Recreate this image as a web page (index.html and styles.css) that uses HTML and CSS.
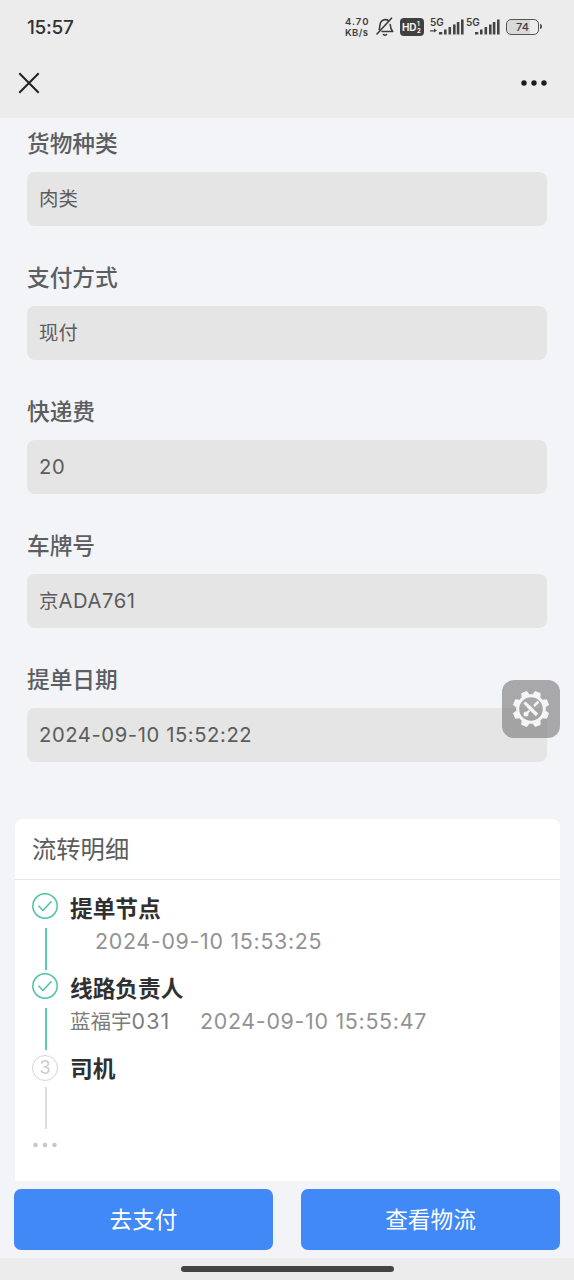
FILE: index.html
```html
<!DOCTYPE html>
<html lang="zh-CN">
<head>
<meta charset="utf-8">
<title>提单</title>
<link rel="stylesheet" href="styles.css">
</head>
<body>
<div class="screen">
  <header class="top">
    <div class="status">
      <span class="clock">15:57</span>
      <div class="indicators">
        <div class="speed"><span>4.70</span><span>KB/s</span></div>
        <svg class="bell" width="18" height="20" viewBox="0 0 18 20" fill="none" stroke="#3c3c3c" stroke-width="1.600" stroke-linecap="round" stroke-linejoin="round"><path d="M3.200 12.500C4.200 10 3.200 7 5.200 4.500C7 2.300 10.500 2 12.800 3.800M14.200 7.500c.2 3 .8 5.300 2.500 7H6M7.500 17.500c.8.900 2.200.9 3 0M15.500 1.200L1 17"/></svg>
        <div class="hd">HD<span class="hd-sub"><i>1</i><i>2</i></span></div>
        <div class="signal"><span>5G</span><svg width="34" height="20" viewBox="0 0 34 20" fill="#444"><path d="M0 13.300h4V11.500l3 2-3 2v-1H0zM9 15h3.300v2.500H9zM14 12.500h2.600v5H14zM18.500 10h2.600v7.500h-2.600zM23 7.500h2.600v10H23zM26.800 5h2.600v12.500h-2.600zM31 2.500h2.600v15H31z"/></svg></div>
        <div class="signal"><span>5G</span><svg width="34" height="20" viewBox="0 0 34 20" fill="#444"><path d="M9 15h3.300v2.500H9zM14 12.500h2.600v5H14zM18.500 10h2.600v7.500h-2.600zM23 7.500h2.600v10H23zM26.800 5h2.600v12.500h-2.600zM31 2.500h2.600v15H31z"/></svg></div>
        <div class="battery"><span>74</span></div>
      </div>
    </div>
    <nav class="nav">
      <svg width="22" height="22" viewBox="0 0 22 22" fill="none" stroke="#222" stroke-width="2"><path d="M1.300 1.300l19.400 19.400M20.700 1.300L1.300 20.700"/></svg>
      <svg width="28" height="8" viewBox="0 0 28 8" fill="#1c1c1c"><circle cx="4" cy="4" r="2.700"/><circle cx="14" cy="4" r="2.700"/><circle cx="24" cy="4" r="2.700"/></svg>
    </nav>
  </header>
  <main class="content">
    <section class="form">
      <div class="field"><label class="label">货物种类</label><div class="value">肉类</div></div>
      <div class="field"><label class="label">支付方式</label><div class="value">现付</div></div>
      <div class="field"><label class="label">快递费</label><div class="value"><span class="num">20</span></div></div>
      <div class="field"><label class="label">车牌号</label><div class="value">京<span class="num">ADA761</span></div></div>
      <div class="field"><label class="label">提单日期</label><div class="value"><span class="num">2024-09-10 15:52:22</span></div></div>
    </section>
    <section class="card">
      <h2 class="card-title">流转明细</h2>
      <ol class="steps">
        <li class="step">
          <div class="rail"><svg width="26" height="26" viewBox="0 0 26 26" fill="none" stroke="#4cc3a0" stroke-width="1.500"><circle cx="13" cy="13" r="12.200"/><path d="M6.500 12.800l4.500 4.700 8.500-9.300"/></svg><i class="line"></i></div>
          <div class="info"><h3>提单节点</h3><p class="indent"><span class="num">2024-09-10 15:53:25</span></p></div>
        </li>
        <li class="step">
          <div class="rail"><svg width="26" height="26" viewBox="0 0 26 26" fill="none" stroke="#4cc3a0" stroke-width="1.500"><circle cx="13" cy="13" r="12.200"/><path d="M6.500 12.800l4.500 4.700 8.500-9.300"/></svg><i class="line"></i></div>
          <div class="info"><h3>线路负责人</h3><p><span class="person">蓝福宇<span class="num">031</span></span><span class="num">2024-09-10 15:55:47</span></p></div>
        </li>
        <li class="step">
          <div class="rail"><span class="number">3</span><i class="line"></i></div>
          <div class="info"><h3>司机</h3></div>
        </li>
      </ol>
      <svg class="more" width="26" height="6" viewBox="0 0 26 6" fill="#c8c8c8"><circle cx="3.500" cy="3" r="2.300"/><circle cx="13" cy="3" r="2.300"/><circle cx="22.500" cy="3" r="2.300"/></svg>
    </section>
    <div class="actions"><button class="btn">去支付</button><button class="btn">查看物流</button></div>
    <button class="tool" aria-label="工具">
      <svg width="38" height="38" viewBox="-19 -19 38 38" fill="none" stroke="#f5f5f5"><circle r="13.300" stroke-width="3"/><g fill="#f5f5f5" stroke="none" transform="rotate(22.500)"><path id="tooth" d="M-4.300-14L-3-18.300H3L4.300-14z"/><use href="#tooth" transform="rotate(45)"/><use href="#tooth" transform="rotate(90)"/><use href="#tooth" transform="rotate(135)"/><use href="#tooth" transform="rotate(180)"/><use href="#tooth" transform="rotate(225)"/><use href="#tooth" transform="rotate(270)"/><use href="#tooth" transform="rotate(315)"/></g><circle cx="-5" cy="5" r="2.500" fill="#f5f5f5" stroke="none"/><path d="M-6.500-6.500L-2-2" stroke-width="3"/><path d="M-3-3L6 6" stroke-width="3.500"/><path d="M7.500-7.500L3-3" stroke-width="2.500"/><path d="M-5 5L-1.500 1.500" stroke-width="2"/></svg>
    </button>
  </main>
  <footer class="home"><i></i></footer>
</div>
</body>
</html>
```
FILE: styles.css
```css
* { box-sizing: border-box; }
body { margin: 0; font-family: Inter, "Noto Sans CJK SC", sans-serif; background: #f3f4f8; }
.screen { width: 574px; height: 1280px; display: flex; flex-direction: column; overflow: hidden; }
.top { height: 118px; background: #ececec; flex: none; }
.status { height: 54px; padding: 0 33px 0 27px; display: flex; align-items: center; justify-content: space-between; }
.clock { font-size: 19px; font-weight: 500; color: #333; letter-spacing: -.3px; }
.indicators { display: flex; align-items: center; color: #3c3c3c; }
.speed { width: 25px; display: flex; flex-direction: column; font-size: 9.5px; line-height: 11px; font-weight: 600; letter-spacing: .4px; }
.speed span:first-child { letter-spacing: 1px; }
.bell { margin-left: 6px; }
.hd { width: 24px; height: 18px; margin-left: 6px; padding-left: 2px; border-radius: 4px; background: #404040; color: #f2f2f2; font-size: 10px; font-weight: 700; display: flex; align-items: center; letter-spacing: -.3px; }
.hd-sub { display: flex; flex-direction: column; margin-left: 1px; font-size: 6px; line-height: 7px; }
.hd-sub i { font-style: normal; }
.signal { position: relative; width: 34px; height: 20px; margin-left: 6px; }
.signal + .signal { margin-left: 2px; }
.signal span { position: absolute; left: 0; top: 0; font-size: 10px; line-height: 10px; font-weight: 600; }
.signal svg { display: block; }
.battery { position: relative; width: 33px; height: 16px; margin: 0 2px 0 6px; border: 1.5px solid #555; border-radius: 5px; background: linear-gradient(90deg, #d9d9d9 74%, #ececec 74%); font-size: 11px; line-height: 14px; font-weight: 500; text-align: center; }
.battery::after { content: ""; position: absolute; right: -4px; top: 4px; width: 2px; height: 5px; background: #555; border-radius: 0 2px 2px 0; }
.nav { height: 58px; padding: 0 26px 0 18px; display: flex; align-items: center; justify-content: space-between; }
.content { position: relative; height: 1140px; flex: none; }
.form { padding: 8px 27px 0; }
.field { height: 134px; }
.label { display: block; height: 46px; line-height: 35px; font-size: 22.7px; font-weight: 500; color: #5c5e62; }
.value { height: 54px; padding-left: 12px; border-radius: 8px; background: #e5e5e5; font-size: 19.4px; line-height: 54px; color: #5c5c5c; white-space: pre; }
.value .num { font-size: 20.2px; letter-spacing: .6px; }
.card { margin: 23px 14px 0 15px; height: 362px; background: #fff; border-radius: 8px 8px 0 0; }
.card-title { margin: 0; height: 61px; padding-left: 17px; border-bottom: 1px solid #e4e6ea; font-size: 24.3px; line-height: 61px; font-weight: 400; color: #5c5c5c; }
.steps { margin: 0; padding: 13px 17px 0; list-style: none; }
.step { display: flex; height: 80px; gap: 12px; }
.rail { width: 26px; display: flex; flex-direction: column; align-items: center; }
.rail svg { flex: none; }
.line { width: 2px; height: 42px; margin: 9px 0 0 1px; background: #5bcbab; }
.number { width: 26px; height: 26px; margin-top: 2px; border: 1.5px solid #d4d4d4; border-radius: 50%; color: #cdcdcd; font-size: 18px; line-height: 23px; text-align: center; }
.number + .line { margin-top: 6px; background: #dedede; }
.info { white-space: nowrap; }
.info h3 { margin: 0; font-size: 22.7px; line-height: 31px; font-weight: 700; color: #303030; }
.info p { margin: 0; font-size: 20.5px; line-height: 35px; color: #929292; }
.info .indent { padding-left: 25px; }
.info .num { font-size: 21.4px; letter-spacing: .7px; }
.person { display: inline-block; width: 130px; color: #7c7c7c; }
.person .num { letter-spacing: 1.2px; }
.more { display: block; margin: 9px 0 0 17px; }
.actions { display: flex; gap: 28px; padding: 8px 14px 0; }
.btn { flex: 1; height: 61px; padding: 0; border: 0; border-radius: 7px; background: #4089f6; color: #fff; font-family: inherit; font-size: 22.7px; line-height: 60px; }
.tool { position: absolute; left: 502px; top: 562px; width: 58px; height: 58px; padding: 0; border: 0; border-radius: 12px; background: rgba(128, 128, 128, .65); display: flex; align-items: center; justify-content: center; }
.home { flex: 1; background: #ececec; display: flex; justify-content: center; padding-top: 8px; }
.home i { width: 213px; height: 6px; border-radius: 3px; background: #444; }
```
